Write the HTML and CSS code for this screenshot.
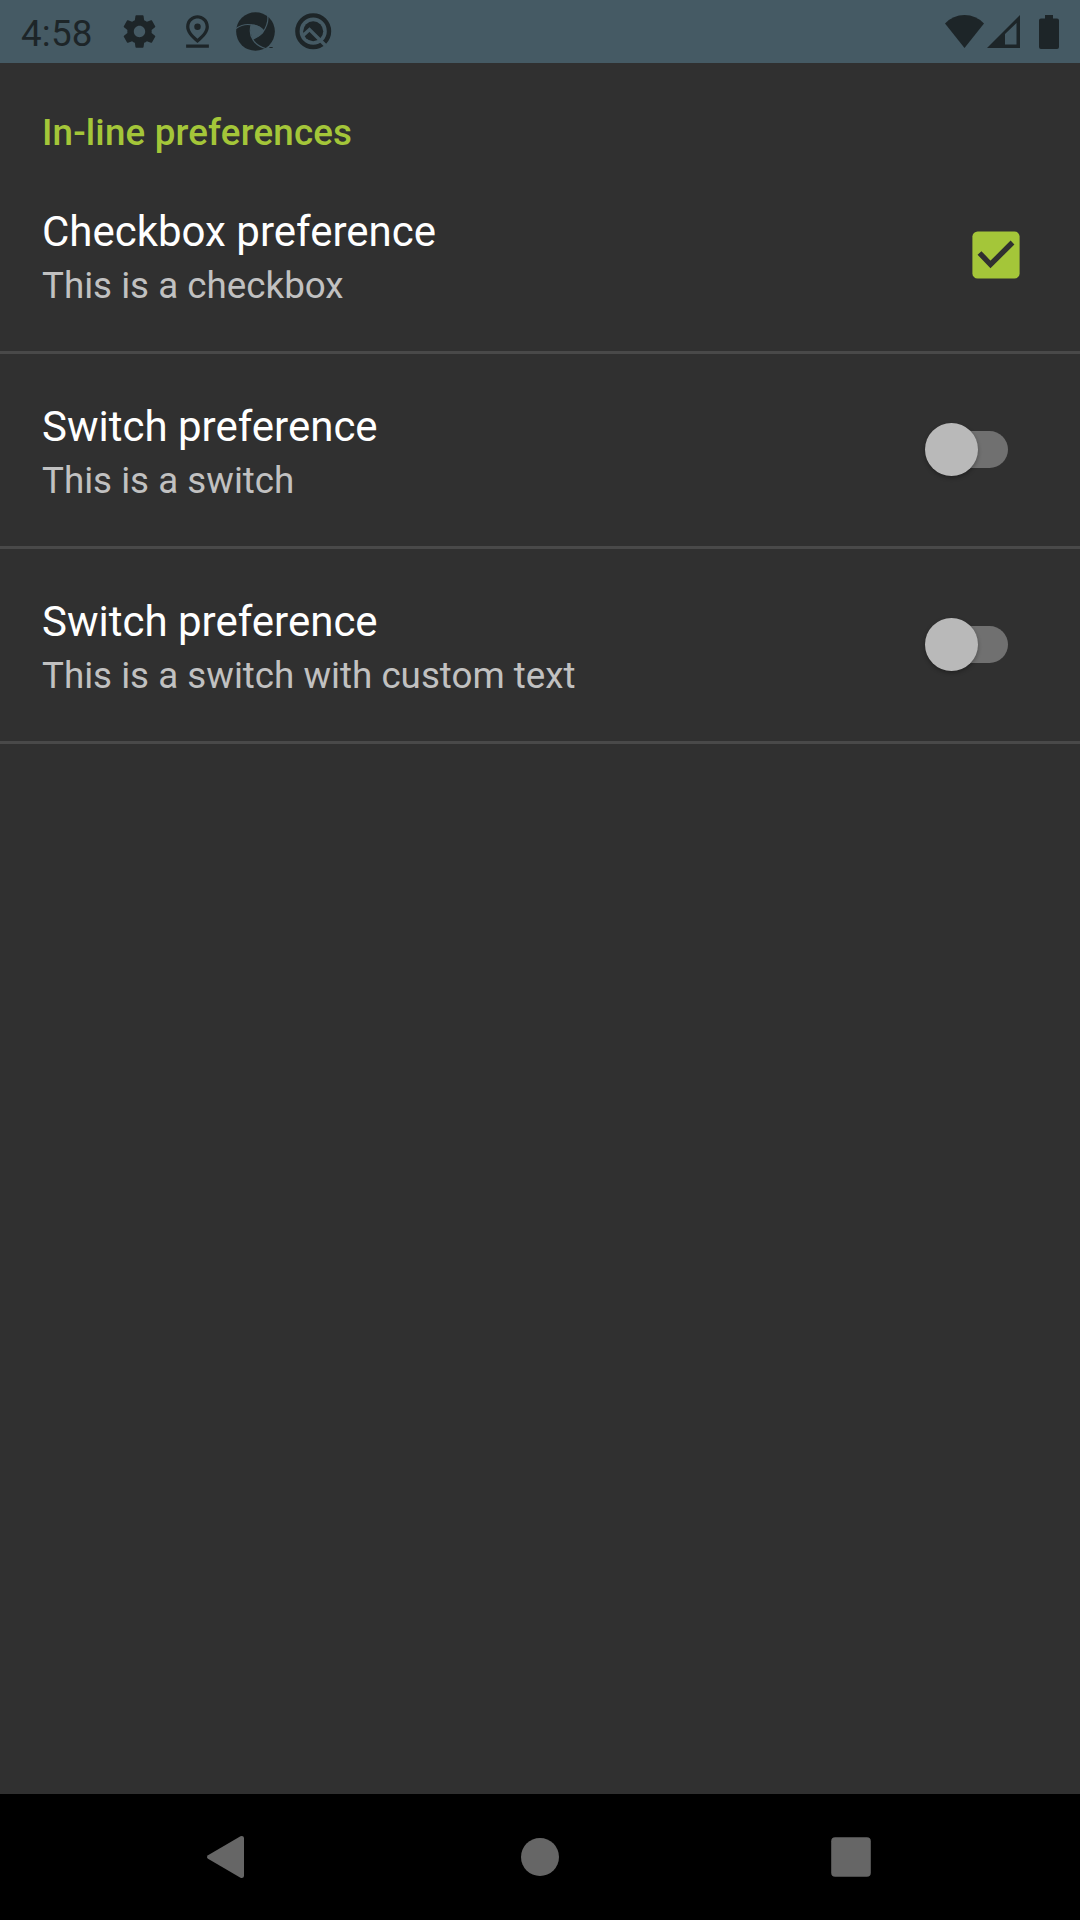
FILE: index.html
```html
<!DOCTYPE html>
<html lang="en">
<head>
<meta charset="utf-8">
<title>In-line preferences</title>
<link rel="stylesheet" href="styles.css">
</head>
<body>
<div class="screen">
  <header class="status">
    <span class="clock">4:58</span>
    <div class="notifications">
      <svg class="icon" viewBox="0 0 24 24"><path d="M19.43 12.98c.04-.32.07-.64.07-.98s-.03-.66-.07-.98l2.110-1.650c.19-.15.24-.42.12-.64l-2-3.460c-.12-.22-.39-.3-.61-.22l-2.490 1c-.52-.4-1.080-.73-1.690-.98l-.38-2.650C14.460 2.180 14.250 2 14 2h-4c-.25 0-.46.18-.49.42l-.38 2.650c-.61.25-1.170.59-1.690.98l-2.490-1c-.23-.09-.49 0-.61.22l-2 3.460c-.13.22-.07.49.12.64l2.110 1.650c-.04.32-.07.65-.07.98s.03.66.07.98l-2.110 1.650c-.19.15-.24.42-.12.64l2 3.460c.12.22.39.3.61.22l2.490-1c.52.4 1.080.73 1.690.98l.38 2.650c.03.24.24.42.49.42h4c.25 0 .46-.18.49-.42l.38-2.650c.61-.25 1.170-.59 1.690-.98l2.490 1c.23.09.49 0 .61-.22l2-3.460c.12-.22.07-.49-.12-.64l-2.110-1.650zM12 15.500c-1.930 0-3.500-1.570-3.500-3.500s1.570-3.500 3.500-3.500 3.500 1.570 3.500 3.500-1.570 3.500-3.500 3.500z"/></svg>
      <svg class="icon" viewBox="0 0 24 24"><path d="M12 4c1.93 0 5 1.4 5 5.15 0 2.16-1.72 4.67-5 7.32-3.28-2.65-5-5.17-5-7.32C7 5.4 10.07 4 12 4m0-2C8.73 2 5 4.46 5 9.15c0 3.12 2.33 6.41 7 9.85 4.67-3.44 7-6.73 7-9.85C19 4.46 15.27 2 12 2zM5 20h14v2H5z"/><circle cx="12" cy="9" r="2"/></svg>
      <svg class="icon" viewBox="198 35 118 118"><circle cx="257" cy="94" r="58.5"/><path class="cut" d="M243 73Q266 72 283 90Q277 106 249 118Q238 94 243 73Z"/><path class="slit" d="M198 85Q220 69 246 74Q268 76 281 91M292 36Q301 66 279 97Q268 109 249 117M244 74Q236 100 250 120Q262 139 292 147"/><path class="cut" d="M286 153L292 143L318 120V153Z"/><path d="M299 141h10v3h-10z"/></svg>
      <svg class="icon" viewBox="0 0 39 39"><circle class="ring" cx="19.2" cy="19.2" r="15.800"/><circle cx="19.2" cy="19.2" r="10"/><path class="slit-q" d="M8 24.500L15.500 17.500L32 34"/></svg>
    </div>
    <div class="system">
      <svg class="wifi" viewBox="0 0 39 33"><path d="M19.500 33L0 8.500Q8 0 19.500 0T39 8.500Z"/></svg>
      <svg class="signal" viewBox="0 0 33 33"><path fill-rule="evenodd" d="M0 33L33 0V33ZM18 29.500H29.500V8L18 19Z"/></svg>
      <svg class="battery" viewBox="0 0 20 34"><path d="M6 0H14V3.500H18Q20 3.500 20 5.500V32Q20 34 18 34H2Q0 34 0 32V5.500Q0 3.500 2 3.500H6Z"/></svg>
    </div>
  </header>
  <main class="preferences">
    <h2 class="category">In-line preferences</h2>
    <div class="row">
      <div class="label"><div class="title">Checkbox preference</div><div class="summary">This is a checkbox</div></div>
      <svg class="checkbox" viewBox="0 0 48 48"><rect x=".4" y=".4" width="47.2" height="47.2" rx="5.200"/><path d="M7.500 22L18.500 33.500L40.500 11.500"/></svg>
    </div>
    <div class="row">
      <div class="label"><div class="title">Switch preference</div><div class="summary">This is a switch</div></div>
      <div class="switch"><div class="thumb"></div></div>
    </div>
    <div class="row">
      <div class="label"><div class="title">Switch preference</div><div class="summary">This is a switch with custom text</div></div>
      <div class="switch"><div class="thumb"></div></div>
    </div>
  </main>
  <nav class="navbar">
    <svg class="nav-icon" viewBox="0 0 42 42"><path d="M0 19.200L32.500 .300Q35.700 -.500 36 2V40Q35.700 42.500 32.500 41.700L0 22.800Q-2 21 0 19.200Z"/></svg>
    <svg class="nav-icon" viewBox="0 0 42 42"><circle cx="21" cy="21" r="19"/></svg>
    <svg class="nav-icon" viewBox="0 0 42 42"><rect x="1.200" y="1.200" width="39.6" height="39.6" rx="4"/></svg>
  </nav>
</div>
</body>
</html>
```
FILE: styles.css
```css
body {
  margin: 0;
  background: #303030;
  font-family: Roboto, "Noto Sans", sans-serif;
}
.screen {
  width: 1080px;
  height: 1920px;
  display: flex;
  flex-direction: column;
  overflow: hidden;
}
svg { display: block; overflow: visible; }
.icon { overflow: hidden; }
.status {
  height: 63px;
  box-sizing: border-box;
  padding: 0 21px 0 21px;
  display: flex;
  align-items: center;
  background: #455a64;
  color: #1d2528;
  fill: #1d2528;
}
.clock {
  width: 99px;
  padding-top: 4px;
  font-size: 36.75px;
  line-height: 42px;
  letter-spacing: .2px;
}
.notifications { display: flex; gap: 19px; }
.icon { width: 39px; height: 39px; }
.cut { fill: #455a64; }
.slit { fill: none; stroke: #455a64; stroke-width: 3.5; }
.ring { fill: none; stroke: #1d2528; stroke-width: 4.4; }
.slit-q { fill: none; stroke: #455a64; stroke-width: 3.4; }
.system { margin-left: auto; display: flex; align-items: center; }
.wifi { width: 39px; height: 33px; }
.signal { width: 33px; height: 33px; margin: 0 19px 0 3px; }
.battery { width: 20px; height: 34px; }
.preferences { flex: 1; }
.category {
  height: 96px;
  box-sizing: border-box;
  margin: 0;
  padding: 48px 42px 0;
  color: #a4c639;
  font-size: 36.75px;
  line-height: 44px;
  font-weight: 500;
  letter-spacing: .16px;
}
.row {
  height: 195px;
  box-sizing: border-box;
  padding: 0 60px 0 42px;
  display: flex;
  align-items: center;
  justify-content: space-between;
  border-bottom: 3px solid #494949;
}
.label { padding-top: 5px; }
.title { color: #fff; font-size: 42px; line-height: 50px; }
.summary { margin-top: 7px; color: #c1c1c1; font-size: 36.75px; line-height: 44px; }
.checkbox { width: 48px; height: 48px; fill: #a4c639; }
.checkbox path { fill: none; stroke: #303030; stroke-width: 5.4; }
.switch {
  width: 74px;
  height: 37px;
  margin: 0 12px 1px 0;
  display: flex;
  align-items: center;
  border-radius: 19px;
  background: #707070;
}
.thumb {
  width: 53px;
  height: 53px;
  flex: none;
  margin-left: -9px;
  border-radius: 50%;
  background: #b9b9b9;
  box-shadow: 0 2px 4px rgba(0, 0, 0, .3);
}
.navbar {
  height: 126px;
  display: flex;
  align-items: center;
  justify-content: center;
  gap: 269px;
  background: #000;
  fill: #666;
}
.nav-icon { width: 42px; height: 42px; }
```
